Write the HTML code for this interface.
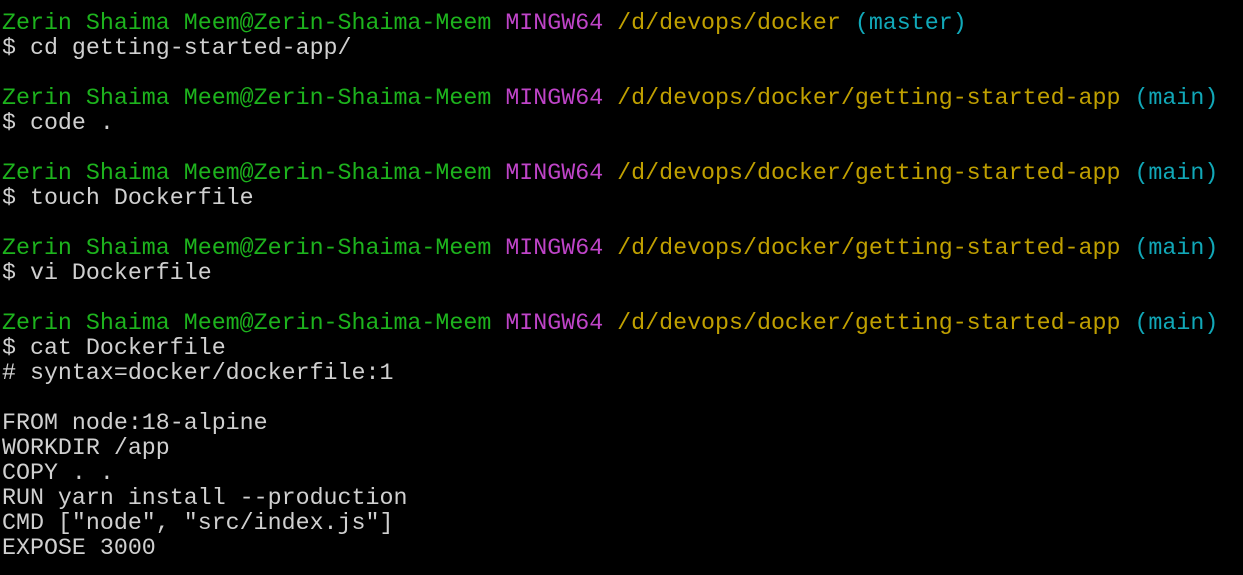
<!DOCTYPE html>
<html><head><meta charset="utf-8"><style>
html,body{margin:0;padding:0;background:#000;width:1243px;height:575px;overflow:hidden}
pre{margin:0;position:absolute;left:2px;top:11px;font-family:"Liberation Mono",monospace;font-size:23.3px;line-height:25px;color:#d0d0d0;white-space:pre}
.g{color:#1db31d}.m{color:#bf44c8}.y{color:#c0a000}.c{color:#11a8b8}
</style></head><body><pre><span class="g">Zerin Shaima Meem@Zerin-Shaima-Meem</span> <span class="m">MINGW64</span> <span class="y">/d/devops/docker</span> <span class="c">(master)</span>
$ cd getting-started-app/

<span class="g">Zerin Shaima Meem@Zerin-Shaima-Meem</span> <span class="m">MINGW64</span> <span class="y">/d/devops/docker/getting-started-app</span> <span class="c">(main)</span>
$ code .

<span class="g">Zerin Shaima Meem@Zerin-Shaima-Meem</span> <span class="m">MINGW64</span> <span class="y">/d/devops/docker/getting-started-app</span> <span class="c">(main)</span>
$ touch Dockerfile

<span class="g">Zerin Shaima Meem@Zerin-Shaima-Meem</span> <span class="m">MINGW64</span> <span class="y">/d/devops/docker/getting-started-app</span> <span class="c">(main)</span>
$ vi Dockerfile

<span class="g">Zerin Shaima Meem@Zerin-Shaima-Meem</span> <span class="m">MINGW64</span> <span class="y">/d/devops/docker/getting-started-app</span> <span class="c">(main)</span>
$ cat Dockerfile
# syntax=docker/dockerfile:1

FROM node:18-alpine
WORKDIR /app
COPY . .
RUN yarn install --production
CMD ["node", "src/index.js"]
EXPOSE 3000</pre></body></html>
